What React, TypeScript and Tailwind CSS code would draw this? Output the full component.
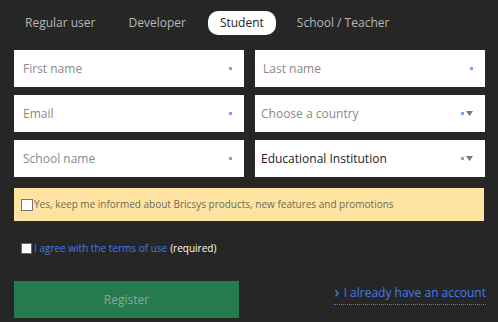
import React from "react";

const Dot = () => <span className="block w-[3px] h-[3px] bg-[#6fa8f7]" />;

function Field({ label, dark, select, padL }: { label: string; dark?: boolean; select?: boolean; padL: string }) {
  return (
    <div className={`flex items-center justify-between h-[37px] bg-white ${padL} pr-[12px]`}>
      <span className={`text-[12px] ${dark ? "text-[#222]" : "text-[#8a8a8a]"}`}>{label}</span>
      <span className="flex items-center gap-[2px]">
        <Dot />
        {select ? (
          <svg width="7" height="5" viewBox="0 0 7 5"><path d="M0 0H7L3.5 5Z" fill="#777" /></svg>
        ) : null}
      </span>
    </div>
  );
}

export default function App() {
  return (
    <div className="w-[498px] h-[322px] bg-[#262626] overflow-hidden" style={{ fontFamily: '"Open Sans", sans-serif' }}>
      <div className="flex items-center h-[45px] pl-[25px]">
        <span className="text-[12px] text-[#b8b8b8]">Regular user</span>
        <span className="ml-[33px] text-[12px] text-[#b8b8b8]">Developer</span>
        <span className="ml-[22px] px-[12px] h-[24px] flex items-center rounded-[10px] bg-white text-[12px] text-[#1e1e1e]">Student</span>
        <span className="ml-[21px] text-[12px] text-[#b8b8b8]">School / Teacher</span>
      </div>
      <div className="px-[14px] pt-[5px] grid grid-cols-[230px_230px] gap-x-[11px] gap-y-[8px]">
        <Field label="First name" padL="pl-[9px]" />
        <Field label="Last name" padL="pl-[8px]" />
        <Field label="Email" padL="pl-[9px]" />
        <Field label="Choose a country" select padL="pl-[6px]" />
        <Field label="School name" padL="pl-[9px]" />
        <Field label="Educational Institution" dark select padL="pl-[6px]" />
      </div>
      <div className="mx-[14px] mt-[11px] h-[33px] bg-[#fee4a0] flex items-center pl-[7px]">
        <span className="w-[12px] h-[12px] bg-white border border-[#777] mr-[1px]" />
        <span className="text-[10px] text-[#6f6a5c]">Yes, keep me informed about Bricsys products, new features and promotions</span>
      </div>
      <div className="flex items-center ml-[21px] mt-[21px] h-[12px]">
        <span className="w-[11px] h-[11px] bg-white border border-[#666] mr-[2px]" />
        <span className="text-[10px] text-[#3f7ce8]">I agree with the terms of use</span>
        <span className="text-[10px] text-white ml-[3px]">(required)</span>
      </div>
      <div className="flex items-start justify-between pr-[12px] pl-[14px] mt-[27px]">
        <div className="w-[225px] h-[37px] bg-[#257a4e] flex items-center justify-center text-[12px] text-[#8caa97]">Register</div>
        <div className="mt-[3px] flex items-center gap-[5px] border-b border-dotted border-[#3f7ce8] pb-[2px] pl-[1px]">
          <svg width="4" height="7" viewBox="0 0 4 7"><path d="M0.5 0.5L3 3.5L0.5 6.5" stroke="#3f7ce8" strokeWidth="1.5" fill="none" /></svg>
          <span className="text-[12px] text-[#3f7ce8] leading-[18px]">I already have an account</span>
        </div>
      </div>
    </div>
  );
}
